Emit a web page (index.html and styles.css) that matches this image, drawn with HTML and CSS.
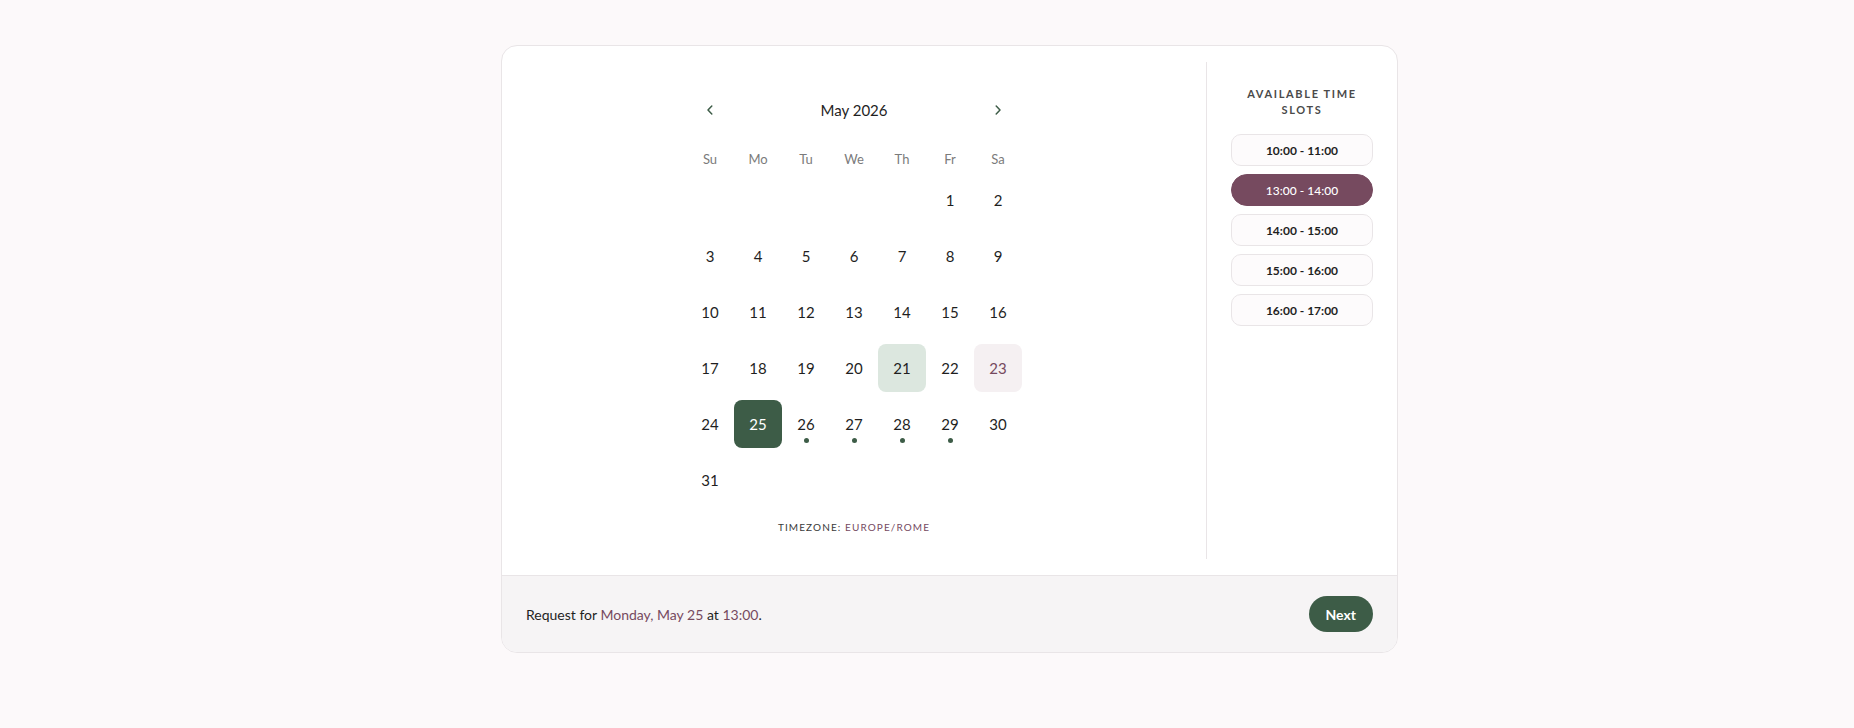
FILE: index.html
```html
<!DOCTYPE html>
<html lang="en">
<head>
<meta charset="utf-8">
<title>Booking</title>
<link rel="stylesheet" href="styles.css">
</head>
<body>
<div class="card">
  <div class="card-body">
    <section class="calendar">
      <div class="cal-inner">
        <div class="cal-header">
          <button class="nav-btn" aria-label="Previous month">
            <svg width="12" height="12" viewBox="0 0 12 12"><path d="M7.8 2 L4 6 L7.8 10" fill="none" stroke="#3d5c47" stroke-width="1.5" stroke-linecap="round" stroke-linejoin="round"/></svg>
          </button>
          <div class="month">May 2026</div>
          <button class="nav-btn" aria-label="Next month">
            <svg width="12" height="12" viewBox="0 0 12 12"><path d="M4.2 2 L8 6 L4.2 10" fill="none" stroke="#3d5c47" stroke-width="1.5" stroke-linecap="round" stroke-linejoin="round"/></svg>
          </button>
        </div>
        <div class="weekdays">
          <span>Su</span><span>Mo</span><span>Tu</span><span>We</span><span>Th</span><span>Fr</span><span>Sa</span>
        </div>
        <div class="days">
          <span class="day empty"></span><span class="day empty"></span><span class="day empty"></span><span class="day empty"></span><span class="day empty"></span>
          <span class="day">1</span><span class="day">2</span>
          <span class="day">3</span><span class="day">4</span><span class="day">5</span><span class="day">6</span><span class="day">7</span><span class="day">8</span><span class="day">9</span>
          <span class="day">10</span><span class="day">11</span><span class="day">12</span><span class="day">13</span><span class="day">14</span><span class="day">15</span><span class="day">16</span>
          <span class="day">17</span><span class="day">18</span><span class="day">19</span><span class="day">20</span><span class="day today">21</span><span class="day">22</span><span class="day weekend-mark">23</span>
          <span class="day">24</span><span class="day selected">25</span><span class="day avail">26</span><span class="day avail">27</span><span class="day avail">28</span><span class="day avail">29</span><span class="day">30</span>
          <span class="day">31</span>
        </div>
        <div class="timezone">Timezone: <span class="tz-value">Europe/Rome</span></div>
      </div>
    </section>
    <aside class="slots">
      <h2 class="slots-title">Available time slots</h2>
      <div class="slot-list">
        <button class="slot">10:00 - 11:00</button>
        <button class="slot active">13:00 - 14:00</button>
        <button class="slot">14:00 - 15:00</button>
        <button class="slot">15:00 - 16:00</button>
        <button class="slot">16:00 - 17:00</button>
      </div>
    </aside>
  </div>
  <footer class="card-footer">
    <p class="summary">Request for <span class="hl">Monday, May 25</span> at <span class="hl">13:00</span>.</p>
    <button class="next-btn">Next</button>
  </footer>
</div>
</body>
</html>
```

FILE: styles.css
```css
* { box-sizing: border-box; }

html, body {
  margin: 0;
  padding: 0;
}

body {
  background: #fcf9fa;
  font-family: Lato, "Open Sans", sans-serif;
  color: #1f1f1f;
}

.card {
  width: 897px;
  margin: 45px 0 0 501px;
  background: #ffffff;
  border: 1px solid #e9e5e7;
  border-radius: 16px;
  overflow: hidden;
}

.card-body {
  display: flex;
  padding: 16px 0;
}

.calendar {
  flex: 1;
  display: flex;
  justify-content: center;
  padding: 32px 0 25px;
}

.cal-inner {
  width: 336px;
  display: flex;
  flex-direction: column;
  align-items: stretch;
}

.cal-header {
  height: 32px;
  display: flex;
  align-items: center;
  justify-content: space-between;
  margin-bottom: 23px;
}

.nav-btn {
  width: 48px;
  height: 32px;
  padding: 0;
  border: 0;
  background: transparent;
  display: flex;
  align-items: center;
  justify-content: center;
  cursor: pointer;
}

.month {
  font-size: 15px;
  color: #1f1f1f;
}

.weekdays {
  display: grid;
  grid-template-columns: repeat(7, 48px);
  height: 20px;
  align-items: center;
  margin-bottom: 7px;
}

.weekdays span {
  text-align: center;
  font-size: 13px;
  color: #7b7b7b;
}

.days {
  display: grid;
  grid-template-columns: repeat(7, 48px);
  grid-auto-rows: 48px;
  row-gap: 8px;
}

.day {
  position: relative;
  display: flex;
  align-items: center;
  justify-content: center;
  font-size: 15px;
  color: #1f1f1f;
  border-radius: 8px;
}

.day.today {
  background: #dce7df;
}

.day.weekend-mark {
  background: #f5f0f2;
  color: #764a5f;
}

.day.selected {
  background: #3d5c47;
  color: #ffffff;
}

.day.avail::after {
  content: "";
  position: absolute;
  left: 50%;
  bottom: 5px;
  width: 5px;
  height: 5px;
  margin-left: -2.5px;
  border-radius: 50%;
  background: #3d5c47;
}

.timezone {
  margin-top: 16px;
  text-align: center;
  font-size: 10px;
  line-height: 14px;
  letter-spacing: 0.11em;
  text-transform: uppercase;
  color: #3a3a3a;
}

.tz-value {
  color: #764a5f;
}

.slots {
  width: 191px;
  border-left: 1px solid #e9e5e7;
  padding: 24px 24px 0;
}

.slots-title {
  margin: 0 0 16px;
  text-align: center;
  font-size: 11px;
  line-height: 16px;
  font-weight: 700;
  letter-spacing: 0.15em;
  text-transform: uppercase;
  color: #4a4a4a;
}

.slot-list {
  display: flex;
  flex-direction: column;
  gap: 8px;
}

.slot {
  height: 32px;
  width: 100%;
  border: 1px solid #e9e5e7;
  background: #fdfbfc;
  border-radius: 10px;
  font-family: Lato, "Open Sans", sans-serif;
  font-size: 12px;
  font-weight: 700;
  color: #1f1f1f;
  cursor: pointer;
}

.slot.active {
  background: #764a5f;
  border-color: #764a5f;
  color: #ffffff;
  font-weight: 500;
  border-radius: 16px;
}

.card-footer {
  height: 77px;
  display: flex;
  align-items: center;
  justify-content: space-between;
  padding: 0 24px;
  background: #f6f4f5;
  border-top: 1px solid #e9e5e7;
}

.summary {
  margin: 0;
  font-size: 14px;
  color: #1f1f1f;
}

.hl {
  color: #764a5f;
}

.next-btn {
  height: 36px;
  padding: 0 17px;
  border: 0;
  border-radius: 18px;
  background: #3d5c47;
  color: #ffffff;
  font-family: Lato, "Open Sans", sans-serif;
  font-size: 14px;
  font-weight: 700;
  cursor: pointer;
}
```
